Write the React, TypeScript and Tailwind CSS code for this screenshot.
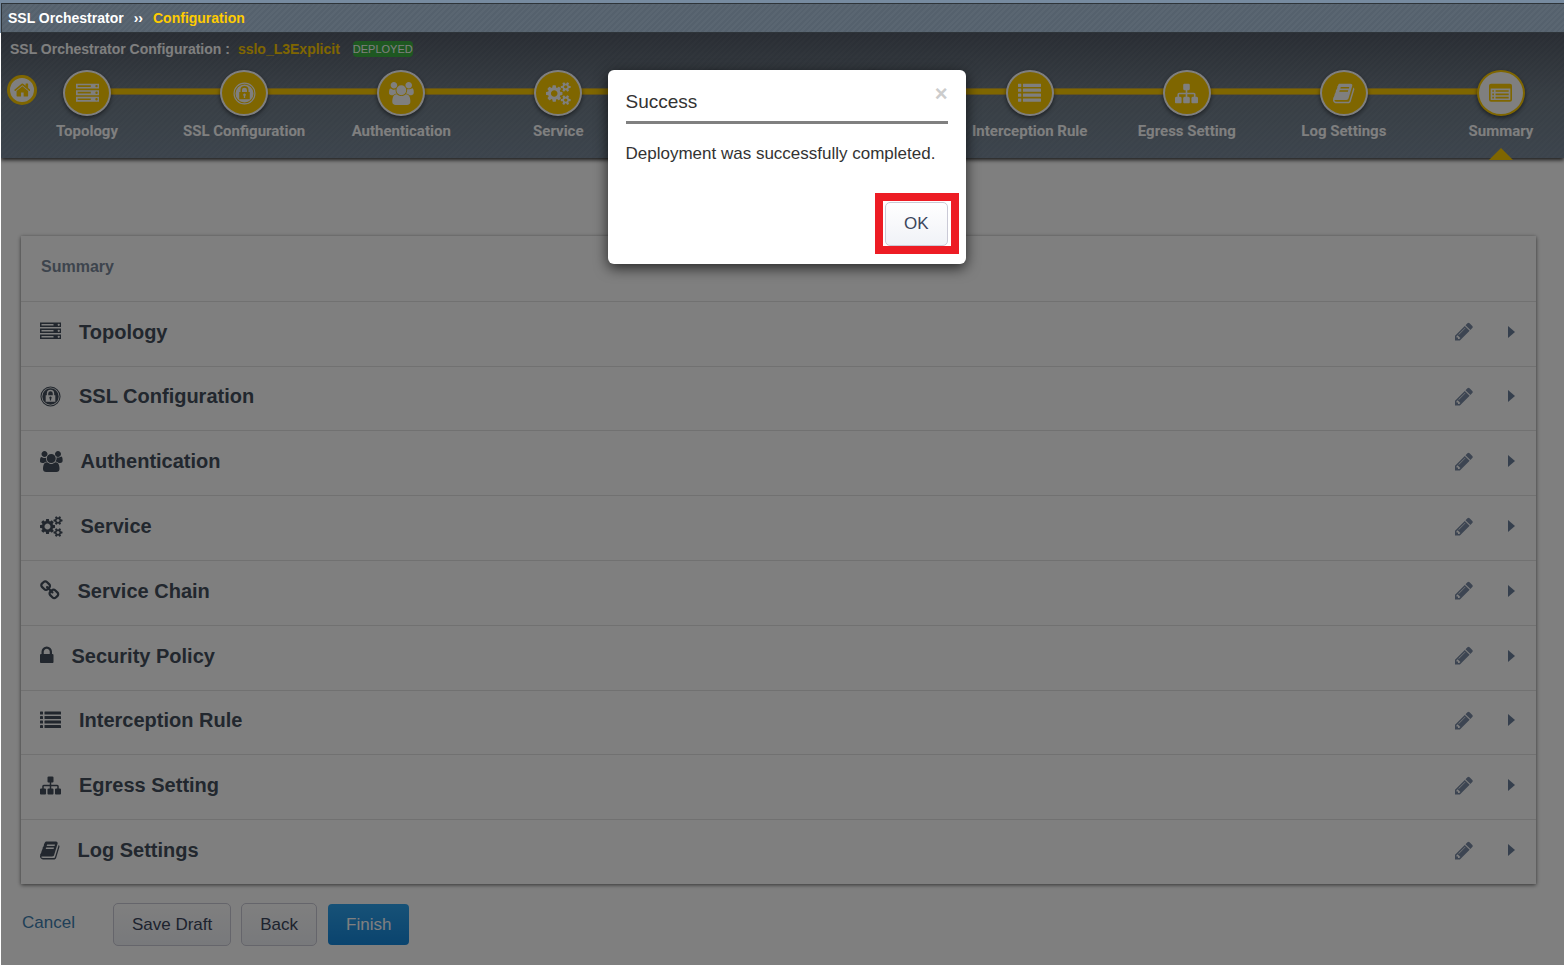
import React from "react";

type IconProps = { size: string };
type IconType = (props: IconProps) => React.ReactElement;

function Glyph({ box, size, children }: { box: string; size: string; children: React.ReactNode }) {
  return (
    <svg viewBox={box} className={`${size} w-auto shrink-0`} fill="currentColor" fillRule="evenodd" aria-hidden="true">
      {children}
    </svg>
  );
}

const ServerIcon: IconType = ({ size }) => (
  <Glyph box="0 0 1792 1792" size={size}>
    {[128, 640, 1152].map((y) => (
      <path
        key={y}
        d={`M0 ${y}h1792v384h-1792zM128 ${y + 128}v128h1024v-128zM1504 ${y + 192}a96 96 0 1 0 192 0a96 96 0 1 0-192 0z`}
      />
    ))}
  </Glyph>
);

const LockCircleIcon: IconType = ({ size }) => (
  <Glyph box="0 0 24 24" size={size}>
    <path d="M12 .5a11.5 11.5 0 1 0 0 23a11.5 11.5 0 1 0 0-23zM12 1.7a10.3 10.3 0 1 1 0 20.6a10.3 10.3 0 1 1 0-20.6z" />
    <path d="M12 2.6a9.4 9.4 0 1 0 0 18.800a9.4 9.4 0 1 0 0-18.800zM6.500 10.500h1.300v-2a4.200 4.200 0 0 1 8.400 0v2h1.300v7.500h-11zM9.400 10.500h5.200v-2a2.600 2.600 0 0 0-5.200 0zM12 12a1.400 1.400 0 0 0-.7 2.600v2h1.400v-2a1.400 1.400 0 0 0-.7-2.600z" />
  </Glyph>
);

const UsersIcon: IconType = ({ size }) => (
  <Glyph box="-64 0 1920 1792" size={size}>
    <path d="M529 896q-162 5-265 128h-134q-82 0-138-40.5t-56-118.5q0-353 124-353 6 0 43.5 21t97.5 42.5 119 21.5q67 0 133-23-5 37-5 66 0 159 93 290zm1071 637q0 120-73 189.5t-194 69.5h-874q-121 0-194-69.5t-73-189.5q0-53 3.5-103.5t14-109 26.5-108.5 43-97.5 62-81 85.5-53.5 111.5-20q10 0 43 21.5t73 48 107 48 135 21.5 135-21.5 107-48 73-48 43-21.5q61 0 111.5 20t85.5 53.5 62 81 43 97.5 26.5 108.5 14 109 3.5 103.5zm-1024-1277q0 106-75 181t-181 75-181-75-75-181 75-181 181-75 181 75 75 181zm704 384q0 159-112.5 271.5t-271.5 112.5-271.5-112.5-112.5-271.5 112.5-271.5 271.5-112.5 271.5 112.5 112.5 271.5zm576 225q0 78-56 118.5t-138 40.5h-134q-103-123-265-128 93-131 93-290 0-29-5-66 66 23 133 23 59 0 119-21.5t97.5-42.5 43.5-21q124 0 124 353zm-128-609q0 106-75 181t-181 75-181-75-75-181 75-181 181-75 181 75 75 181z" />
  </Glyph>
);

const CogsIcon: IconType = ({ size }) => (
  <Glyph box="-64 0 1920 1792" size={size}>
    <path d="M832 896q0-106-75-181t-181-75-181 75-75 181 75 181 181 75 181-75 75-181zm768 512q0-52-38-90t-90-38-90 38-38 90q0 53 37.500 90.500t90.500 37.500 90.500-37.500 37.500-90.500zm0-1024q0-52-38-90t-90-38-90 38-38 90q0 53 37.500 90.500t90.500 37.500 90.500-37.500 37.500-90.500zm-384 421v185q0 10-7 19.500t-16 10.500l-155 24q-11 35-32 76 34 48 90 115 7 11 7 20 0 12-7 19-23 30-82.500 89.500t-78.500 59.500q-11 0-21-7l-115-90q-37 19-77 31-11 108-23 155-7 24-30 24h-186q-11 0-20-7.500t-10-17.500l-23-153q-34-10-75-31l-118 89q-7 7-20 7-11 0-21-8-144-133-144-160 0-9 7-19 10-14 41-53t47-61q-23-44-35-82l-152-24q-10-1-17-9.500t-7-19.500v-185q0-10 7-19.500t16-10.500l155-24q11-35 32-76-34-48-90-115-7-11-7-20 0-12 7-20 22-30 82-89t79-59q11 0 21 7l115 90q34-18 77-32 11-108 23-154 7-24 30-24h186q11 0 20 7.500t10 17.500l23 153q34 10 75 31l118-89q8-7 20-7 11 0 21 8 144 133 144 160 0 8-7 19-12 16-42 54t-45 60q23 48 34 82l152 23q10 2 17 10.500t7 19.500zm640 533v140q0 16-149 31-12 27-30 52 51 113 51 138 0 4-4 7-122 71-124 71-8 0-46-47t-52-68q-20 2-30 2t-30-2q-14 21-52 68t-46 47q-2 0-124-71-4-3-4-7 0-25 51-138-18-25-30-52-149-15-149-31v-140q0-16 149-31 13-29 30-52-51-113-51-138 0-4 4-7 4-2 35-20t59-34 30-16q8 0 46 46.500t52 67.500q20-2 30-2t30 2q51-71 92-112l6-2q4 0 124 70 4 3 4 7 0 25-51 138 17 23 30 52 149 15 149 31zm0-1024v140q0 16-149 31-12 27-30 52 51 113 51 138 0 4-4 7-122 71-124 71-8 0-46-47t-52-68q-20 2-30 2t-30-2q-14 21-52 68t-46 47q-2 0-124-71-4-3-4-7 0-25 51-138-18-25-30-52-149-15-149-31v-140q0-16 149-31 13-29 30-52-51-113-51-138 0-4 4-7 4-2 35-20t59-34 30-16q8 0 46 46.500t52 67.500q20-2 30-2t30 2q51-71 92-112l6-2q4 0 124 70 4 3 4 7 0 25-51 138 17 23 30 52 149 15 149 31z" />
  </Glyph>
);

const ChainIcon: IconType = ({ size }) => (
  <Glyph box="64 0 1664 1792" size={size}>
    <path d="M1520 1216q0-40-28-68l-208-208q-28-28-68-28-42 0-72 32 3 3 19 18.500t21.500 21.500 15 19 13 25.500 3.500 27.500q0 40-28 68t-68 28q-15 0-27.500-3.500t-25.500-13-19-15-21.500-21.500-18.500-19q-33 31-33 73 0 40 28 68l206 207q27 27 68 27 40 0 68-26l147-146q28-28 28-67zm-703-705q0-40-28-68l-206-207q-28-28-68-28-39 0-68 27l-147 146q-28 28-28 67 0 40 28 68l208 208q27 27 68 27 42 0 72-31-3-3-19-18.500t-21.500-21.500-15-19-13-25.500-3.500-27.500q0-40 28-68t68-28q15 0 27.500 3.500t25.500 13 19 15 21.500 21.500 18.500 19q33-31 33-73zm895 705q0 120-85 203l-147 146q-83 83-203 83-121 0-204-85l-206-207q-83-83-83-203 0-123 88-209l-88-88q-86 88-208 88-120 0-204-84l-208-208q-84-84-84-204t85-203l147-146q83-83 203-83 121 0 204 85l206 207q83 83 83 203 0 123-88 209l88 88q86-88 208-88 120 0 204 84l208 208q84 84 84 204z" />
  </Glyph>
);

const LockIcon: IconType = ({ size }) => (
  <Glyph box="320 0 1152 1792" size={size}>
    <path d="M640 768h512v-192q0-106-75-181t-181-75-181 75-75 181v192zm832 96v576q0 40-28 68t-68 28h-960q-40 0-68-28t-28-68v-576q0-40 28-68t68-28h32v-192q0-184 132-316t316-132 316 132 132 316v192h32q40 0 68 28t28 68z" />
  </Glyph>
);

const ListIcon: IconType = ({ size }) => (
  <Glyph box="0 0 1792 1792" size={size}>
    {[128, 512, 896, 1280].map((y) => (
      <g key={y}>
        <rect x="0" y={y} width="256" height="256" rx="32" />
        <rect x="384" y={y} width="1408" height="256" rx="32" />
      </g>
    ))}
  </Glyph>
);

const SitemapIcon: IconType = ({ size }) => (
  <Glyph box="0 0 1792 1792" size={size}>
    <path d="M1792 1248v320q0 40-28 68t-68 28h-320q-40 0-68-28t-28-68v-320q0-40 28-68t68-28h96v-192h-512v192h96q40 0 68 28t28 68v320q0 40-28 68t-68 28h-320q-40 0-68-28t-28-68v-320q0-40 28-68t68-28h96v-192h-512v192h96q40 0 68 28t28 68v320q0 40-28 68t-68 28h-320q-40 0-68-28t-28-68v-320q0-40 28-68t68-28h96v-192q0-52 38-90t90-38h512v-192h-96q-40 0-68-28t-28-68v-320q0-40 28-68t68-28h320q40 0 68 28t28 68v320q0 40-28 68t-68 28h-96v192h512q52 0 90 38t38 90v192h96q40 0 68 28t28 68z" />
  </Glyph>
);

const BookIcon: IconType = ({ size }) => (
  <Glyph box="64 0 1664 1792" size={size}>
    <path d="M1703 478q40 57 18 129l-275 906q-19 64-76.500 107.500t-122.500 43.500h-923q-77 0-148.500-53.500t-99.500-131.500q-24-67-2-127 0-4 3-27t4-37q1-8-3-21.500t-3-19.500q2-11 8-21t16.500-23.500 16.500-23.500q23-38 45-91.500t30-91.500q3-10 .5-30t-.5-28q3-11 17-28t17-23q21-36 42-92t25-90q1-9-2.500-32t.5-28q4-13 22-30.500t22-22.500q19-26 42.500-84.500t27.500-96.500q1-8-3-25.500t-2-26.500q2-8 9-18t18-23 17-21q8-12 16.500-30.500t15-35 16-36 19.500-32 26.500-23.500 36-11.500 47.500 5.500l-1 3q38-9 51-9h761q74 0 114 56t18 130l-274 906q-36 119-71.500 153.500t-128.500 34.500h-869q-27 0-38 15-11 16-1 43 24 70 144 70h923q29 0 56-15.500t35-41.500l300-987q7-22 5-57 38 15 59 43zm-1064 2q-4 13 2 22.500t20 9.500h608q13 0 25.500-9.500t16.500-22.500l21-64q4-13-2-22.500t-20-9.500h-608q-13 0-25.500 9.500t-16.500 22.500zm-83 256q-4 13 2 22.500t20 9.500h608q13 0 25.500-9.500t16.500-22.500l21-64q4-13-2-22.500t-20-9.500h-608q-13 0-25.500 9.500t-16.500 22.500z" />
  </Glyph>
);

const ListAltIcon: IconType = ({ size }) => (
  <Glyph box="0 0 1792 1792" size={size}>
    <path d="M160 128h1472a160 160 0 0 1 160 160v1088a160 160 0 0 1-160 160h-1472a160 160 0 0 1-160-160v-1088a160 160 0 0 1 160-160zM128 512v864l32 32h1472l32-32v-864z" />
    {[640, 896, 1152].map((y) => (
      <path key={y} d={`M256 ${y}h128v128h-128zM512 ${y}h1024v128h-1024z`} />
    ))}
  </Glyph>
);

const HomeIcon: IconType = ({ size }) => (
  <Glyph box="64 0 1664 1792" size={size}>
    <path d="M1472 992v480q0 26-19 45t-45 19h-384v-384h-256v384h-384q-26 0-45-19t-19-45v-480q0-1 .5-3t.5-3l575-474 575 474q1 2 1 6zm223-69l-62 74q-8 9-21 11h-3q-13 0-21-7l-692-577-692 577q-12 8-24 7-13-2-21-11l-62-74q-8-10-7-23.500t11-21.500l719-599q32-26 76-26t76 26l244 204v-195q0-14 9-23t23-9h192q14 0 23 9t9 23v408l219 182q10 8 11 21.500t-7 23.500z" />
  </Glyph>
);

const PencilIcon: IconType = ({ size }) => (
  <Glyph box="128 0 1536 1792" size={size}>
    <path d="M491 1536l91-91-235-235-91 91v107h128v128h107zm523-928q0-22-22-22-10 0-17 7l-542 542q-7 7-7 17 0 22 22 22 10 0 17-7l542-542q7-7 7-17zm-54-192l416 416-832 832h-416v-416zm683 96q0 53-37 90l-166 166-416-416 166-165q36-38 90-38 53 0 91 38l235 234q37 39 37 91z" />
  </Glyph>
);

const CaretIcon: IconType = ({ size }) => (
  <Glyph box="0 0 7 12" size={size}>
    <path d="M0 0l7 6-7 6z" />
  </Glyph>
);

const sections: { label: string; icon: IconType }[] = [
  { label: "Topology", icon: ServerIcon },
  { label: "SSL Configuration", icon: LockCircleIcon },
  { label: "Authentication", icon: UsersIcon },
  { label: "Service", icon: CogsIcon },
  { label: "Service Chain", icon: ChainIcon },
  { label: "Security Policy", icon: LockIcon },
  { label: "Interception Rule", icon: ListIcon },
  { label: "Egress Setting", icon: SitemapIcon },
  { label: "Log Settings", icon: BookIcon },
];

const STRIPES =
  "bg-[repeating-linear-gradient(135deg,rgba(255,255,255,0.03)_0_2px,transparent_2px_4px)]";

function Breadcrumb() {
  return (
    <div className="bg-[#768a9f] pt-[3px] pl-px">
      <nav className="border-y border-l border-[#2e3439] bg-[#55616d]">
        <div className={`flex h-7 items-center pl-1.5 text-sm font-bold text-white ${STRIPES}`}>
          <a href="#orchestrator">SSL Orchestrator</a>
          <span className="px-[10px]">››</span>
          <a href="#configuration" className="text-[#fc0]">
            Configuration
          </a>
        </div>
      </nav>
    </div>
  );
}

function Step({ label, icon: Icon, active }: { label: string; icon: IconType; active?: boolean }) {
  return (
    <li className="relative w-16">
      <a href={`#step-${label}`} className="flex flex-col items-center gap-1">
        <span
          className={
            active
              ? "flex h-[46px] w-12 items-center justify-center rounded-[50%] border-2 border-[#fc0] bg-white text-[#fc0] shadow-[0_2px_4px_rgba(0,0,0,0.5)]"
              : "flex h-[46px] w-12 items-center justify-center rounded-[50%] border-2 border-white bg-[#fc0] text-white shadow-[0_2px_4px_rgba(0,0,0,0.5)]"
          }
        >
          <Icon size="h-[23px]" />
        </span>
        <span className="font-['Roboto',sans-serif] text-[15px] leading-[22px] font-bold whitespace-nowrap text-white">
          {label}
        </span>
      </a>
      {active && (
        <svg viewBox="0 0 24 12" className="absolute top-[78px] left-5 w-6 fill-[#fc0]" aria-hidden="true">
          <path d="M12 0l12 12h-24z" />
        </svg>
      )}
    </li>
  );
}

function Stepper() {
  return (
    <header className="bg-linear-to-b from-[#535b68] via-[#6f7c88] via-50% to-[#79899a] shadow-[0_2px_4px_rgba(0,0,0,0.8)]">
      <div className={`pb-4 ${STRIPES}`}>
        <h1 className="flex h-8 items-center pl-[9px] text-sm font-bold text-white">
          SSL Orchestrator Configuration :<span className="pl-2 text-[#fc0]">sslo_L3Explicit</span>
          <span className="ml-[13px] rounded-sm bg-[#3cb043] text-[11px] leading-4 font-normal">DEPLOYED</span>
        </h1>
        <div className="flex items-start pt-[6px] pl-1.5">
          <a
            href="#home"
            aria-label="Home"
            className="mt-1 flex size-[30px] items-center justify-center rounded-full border-[3px] border-[#fc0] bg-white text-[#fc0]"
          >
            <HomeIcon size="h-[18px]" />
          </a>
          <div className="relative -mt-px ml-[18px] flex-1 pr-[31px]">
            <div className="absolute top-[18px] right-16 left-8 h-[7px] border-y border-[#c9a63a] bg-[#fc0]" />
            <ol className="relative flex justify-between">
              {sections.map((s) => (
                <Step key={s.label} {...s} />
              ))}
              <Step label="Summary" icon={ListAltIcon} active />
            </ol>
          </div>
        </div>
      </div>
    </header>
  );
}

function SummaryPanel() {
  return (
    <section className="mt-[78px] mr-7 ml-5 grid min-h-[648px] auto-rows-fr bg-white shadow-[0_1px_4px_rgba(0,0,0,0.6)]">
      <h2 className="flex items-center pb-0.5 pl-5 text-base font-bold text-[#7b899b]">Summary</h2>
      {sections.map(({ label, icon: Icon }) => (
        <div key={label} className="flex items-center border-t border-[#e3e3e3] pr-[21px] pb-1 pl-[19px] text-[#444f5c]">
          <Icon size="h-[21px]" />
          <h3 className="ml-[18px] flex-1 text-xl font-bold">{label}</h3>
          <button type="button" aria-label={`Edit ${label}`} className="text-[#7b8ba4]">
            <PencilIcon size="h-[21px]" />
          </button>
          <button type="button" aria-label={`Expand ${label}`} className="ml-[35px] text-[#6b7f9b]">
            <CaretIcon size="h-3" />
          </button>
        </div>
      ))}
    </section>
  );
}

function Actions() {
  return (
    <div className="flex items-center px-[21px] pt-[19px] pb-4 text-[17px]">
      <a href="#cancel" className="mr-[38px] pb-1 text-[#3f7fb0]">
        Cancel
      </a>
      <button
        type="button"
        className="mr-[10px] h-[43px] rounded-[5px] border border-[#cacad6] bg-linear-to-b from-white to-[#f0f2f7] px-[18px] text-[#3c465c]"
      >
        Save Draft
      </button>
      <button
        type="button"
        className="mr-[11px] h-[43px] rounded-[5px] border border-[#cacad6] bg-linear-to-b from-white to-[#f0f2f7] px-[18px] text-[#3c465c]"
      >
        Back
      </button>
      <button type="button" className="h-[41px] rounded-sm bg-linear-to-b from-[#2ea4ef] to-[#1488dd] px-[18px] text-white">
        Finish
      </button>
    </div>
  );
}

function SuccessDialog() {
  return (
    <div className="absolute inset-0 flex items-start justify-center bg-black/50 pt-[37px] pl-2">
      <div
        role="dialog"
        aria-labelledby="dialog-title"
        className="relative w-[358px] rounded-md bg-white px-[18px] pt-[19px] pb-[18px] text-[#333] shadow-[0_4px_14px_rgba(0,0,0,0.7)]"
      >
        <button
          type="button"
          aria-label="Close"
          className="absolute top-3 right-[18px] text-[22px] leading-6 font-bold text-[#ccc]"
        >
          ×
        </button>
        <h2 id="dialog-title" className="border-b-[3px] border-[#808080] pb-[7px] text-[19px] leading-[25px]">
          Success
        </h2>
        <p className="pt-[18px] text-[17px] leading-6">Deployment was successfully completed.</p>
        <div className="flex justify-end pt-9">
          <div className="relative">
            <button
              type="button"
              className="block h-11 rounded-[5px] border border-[#cacad6] bg-linear-to-b from-white to-[#f0f2f7] px-[18px] text-[17px] text-[#3c465c]"
            >
              OK
            </button>
            <div className="pointer-events-none absolute -top-[9px] -right-[11px] -bottom-2 -left-[10px] border-8 border-[#ed1c24]" />
          </div>
        </div>
      </div>
    </div>
  );
}

export default function App() {
  return (
    <div className="flex min-h-screen flex-col bg-white font-['Liberation_Sans',Arial,sans-serif]">
      <Breadcrumb />
      <main className="relative ml-px flex-1 overflow-hidden bg-white">
        <Stepper />
        <SummaryPanel />
        <Actions />
        <SuccessDialog />
      </main>
    </div>
  );
}
